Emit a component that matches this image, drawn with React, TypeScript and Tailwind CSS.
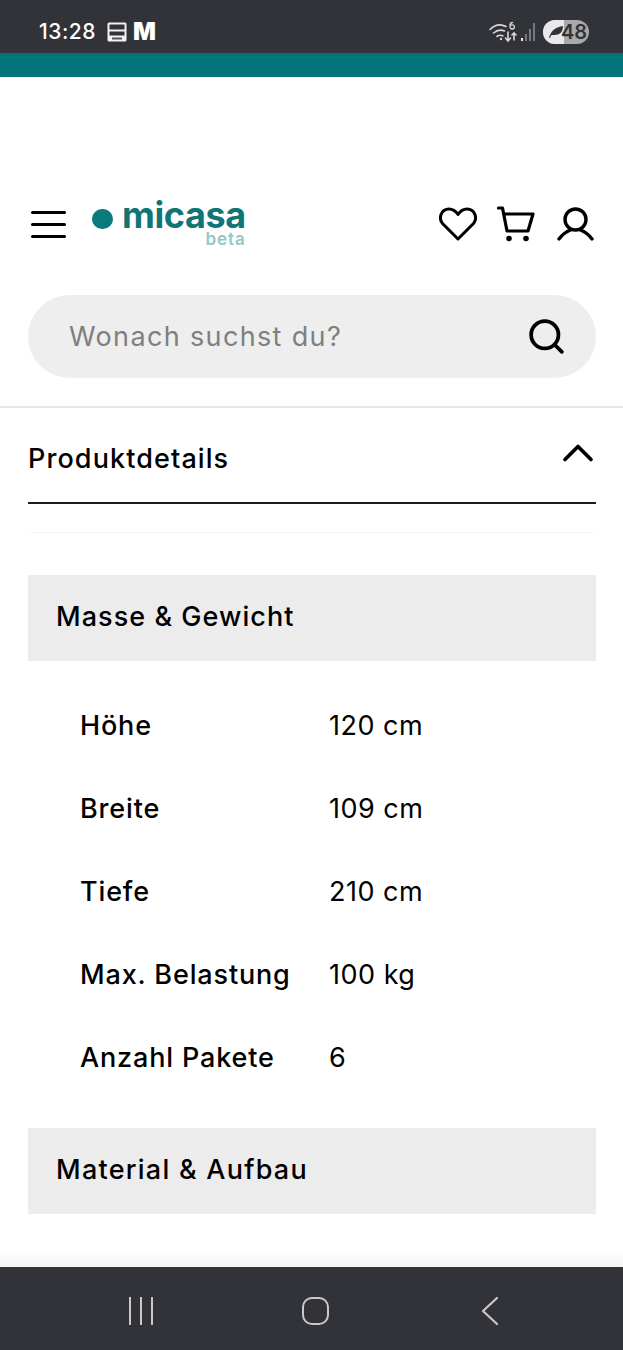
import { Search, ChevronUp } from 'lucide-react';

const measures = [
  ['Höhe', '120 cm'],
  ['Breite', '109 cm'],
  ['Tiefe', '210 cm'],
  ['Max. Belastung', '100 kg'],
  ['Anzahl Pakete', '6'],
];

function StatusBar() {
  return (
    <div className="flex h-[53px] shrink-0 items-center justify-between bg-[#323338] pl-[39px] pr-[34px] pt-[10px] text-white">
      <div className="flex items-center">
        <span className="text-[21px] font-medium leading-none tracking-[0.5px]">13:28</span>
        <svg className="ml-[11px]" width="20" height="20" viewBox="0 0 20 20">
          <rect x="0.5" y="0.5" width="19" height="19" rx="1.500" fill="#f2f2f2" />
          <rect x="2.500" y="2.500" width="15" height="5" fill="#323338" />
          <rect x="2.500" y="9.500" width="15" height="4" fill="#323338" />
          <rect x="5" y="15.500" width="10" height="2" fill="#555" />
        </svg>
        <span className="ml-[6px] text-[24px] font-black leading-none">M</span>
      </div>
      <div className="flex items-center">
        <svg width="30" height="22" viewBox="0 0 30 22" fill="none" stroke="#d8d8d8" strokeLinecap="round">
          <path d="M1 8.500C6 3.500 12 3 17 5.500" strokeWidth="1.600" />
          <path d="M4.500 12C8 9 12 8.500 15.500 10" strokeWidth="1.600" />
          <path d="M8 15.500c2-1.500 4-1.500 6-.5" strokeWidth="1.600" />
          <circle cx="12" cy="18" r="1.200" fill="#d8d8d8" stroke="none" />
          <path d="M19 11v9m-2.500-3 2.500 3 2.500-3" strokeWidth="1.600" />
          <path d="M25 19v-7m-2 2 2-2 2 2" strokeWidth="1.600" />
          <path d="M23.500 1.500c-1.800 0-2.500 1.500-2.500 3.500s.8 3 2.200 3 2.200-1 2.200-2.200-.9-2-2.200-2-2.200.8-2.200 1.500" strokeWidth="1.300" />
        </svg>
        <svg className="ml-[1px]" width="18" height="20" viewBox="0 0 18 20" fill="#77787c">
          <rect x="1" y="16" width="2" height="3" fill="#e8e8e8" />
          <rect x="5" y="12" width="2" height="7" />
          <rect x="9" y="7" width="2" height="12" />
          <rect x="13" y="1" width="2" height="18" />
        </svg>
        <div className="ml-[5px] flex h-[24px] w-[46px] overflow-hidden rounded-full bg-[#a9a9ab]">
          <div className="flex w-[21px] shrink-0 items-center justify-end bg-[#e9e9e9]">
            <svg width="16" height="14" viewBox="0 0 16 14">
              <path d="M1 13C3 5 8 2 15 1c0 6-3 9-9 9-1.500 0-2.500-.5-3 .5L2 13z" fill="#323338" />
            </svg>
          </div>
          <span className="-ml-[3px] text-[20px] font-semibold leading-[24px] text-[#323338]">48</span>
        </div>
      </div>
    </div>
  );
}

function Header() {
  return (
    <div className="mt-[126px] flex h-[42px] items-center justify-between pl-[31px] pr-[29px]">
      <div className="flex items-center">
        <div className="flex w-[35px] flex-col gap-[9px]">
          <div className="h-[3px] rounded-full bg-black" />
          <div className="h-[3px] rounded-full bg-black" />
          <div className="h-[3px] rounded-full bg-black" />
        </div>
        <div className="ml-[26px] mt-[1px] flex items-start">
          <div className="mt-[5px] h-[20px] w-[21px] rounded-full bg-[#0b7a7c]" />
          <div className="ml-[9px] flex flex-col items-end">
            <span className="text-[36px] font-bold leading-[22px] tracking-[-0.4px] text-[#0f7577]">micasa</span>
            <span className="mt-[6px] text-[17px] font-semibold leading-[14px] tracking-[0.9px] text-[#93c7c6]">beta</span>
          </div>
        </div>
      </div>
      <div className="flex items-center">
        <svg width="38" height="34" viewBox="0 0 38 34" fill="none" stroke="black" strokeWidth="3" strokeLinejoin="round">
          <path d="M19 32 3.500 16.500C-.5 12 1.500 2 10 2c4.500 0 7 2.500 9 5.500C21 4.500 23.500 2 28 2c8.500 0 10.500 10 6.500 14.500z" />
        </svg>
        <svg className="ml-[20px]" width="38" height="36" viewBox="0 0 38 36" fill="none" stroke="black" strokeWidth="3.200" strokeLinecap="round" strokeLinejoin="round">
          <path d="M1.500 2h4L10 25h21l5-17H7" />
          <circle cx="12" cy="32.500" r="1.200" fill="black" />
          <circle cx="29" cy="32.500" r="1.200" fill="black" />
        </svg>
        <svg className="ml-[22px]" width="37" height="34" viewBox="0 0 37 34" fill="none" stroke="black" strokeWidth="3.400" strokeLinecap="round">
          <circle cx="18.500" cy="12.500" r="10.500" />
          <path d="M2 32c3-4 7.500-7.500 11.500-9M35 32c-3-4-7.500-7.500-11.500-9" />
        </svg>
      </div>
    </div>
  );
}

function SectionBar({ label, spacing }: { label: string; spacing: string }) {
  return (
    <div className={`flex h-[86px] items-center bg-[#ececec] pb-[4px] pl-[28px] text-[27px] font-medium leading-none text-black ${spacing}`}>
      {label}
    </div>
  );
}

export default function App() {
  return (
    <div className="flex h-[1350px] w-[623px] flex-col overflow-hidden bg-white font-['Inter',sans-serif]">
      <StatusBar />
      <div className="h-[24px] shrink-0 bg-[#00747a]" />
      <Header />

      <div className="ml-[28px] mr-[27px] mt-[50px] flex h-[83px] shrink-0 items-center justify-between rounded-full bg-[#eeeeee] pl-[41px] pr-[29px]">
        <span className="text-[27px] leading-none tracking-[1.35px] text-[#7f7f7f]">Wonach suchst du?</span>
        <Search size={41} strokeWidth={2.200} className="text-black" />
      </div>

      <div className="mt-[28px] h-[2px] shrink-0 bg-[#e8e8e8]" />

      <div className="ml-[28px] mr-[27px] flex-1">
        <div className="flex h-[96px] items-center justify-between border-b-2 border-[#1c1c1c]">
          <span className="pt-[6px] text-[27px] font-medium leading-none tracking-[1.1px] text-black">Produktdetails</span>
          <ChevronUp size={52} strokeWidth={1.700} className="-mr-[8px] -mt-[5px] text-black" />
        </div>
        <div className="mt-[28px] h-px bg-[#f6f6f6]" />

        <div className="mt-[42px]">
          <SectionBar label="Masse & Gewicht" spacing="tracking-[1.05px]" />
        </div>
        <div className="flex flex-col pb-[29px] pl-[52px] pt-[23px]">
          {measures.map(([name, value]) => (
            <div key={name} className="flex h-[83px] items-center text-[27px] leading-none text-black">
              <span className="w-[249px] font-medium tracking-[0.85px]">{name}</span>
              <span className="tracking-[0.5px]">{value}</span>
            </div>
          ))}
        </div>
        <SectionBar label="Material & Aufbau" spacing="tracking-[1.25px]" />
      </div>

      <div className="h-[17px] shrink-0 bg-gradient-to-b from-white to-[#f4f4f4]" />
      <div className="flex h-[83px] shrink-0 items-center bg-[#323338]">
        <div className="flex w-full items-center justify-between pl-[129px] pr-[123px] pt-[4px]">
          <div className="flex gap-[9px]">
            <div className="h-[28px] w-[2px] bg-[#c9c9cb]" />
            <div className="h-[28px] w-[2px] bg-[#c9c9cb]" />
            <div className="h-[28px] w-[2px] bg-[#c9c9cb]" />
          </div>
          <div className="-ml-[2px] h-[28px] w-[27px] rounded-[10px] border-2 border-[#c9c9cb]" />
          <svg width="20" height="30" viewBox="0 0 20 30" fill="none" stroke="#c9c9cb" strokeWidth="2.200" strokeLinecap="round" strokeLinejoin="round">
            <path d="M17 2 3 15l14 13" />
          </svg>
        </div>
      </div>
    </div>
  );
}
